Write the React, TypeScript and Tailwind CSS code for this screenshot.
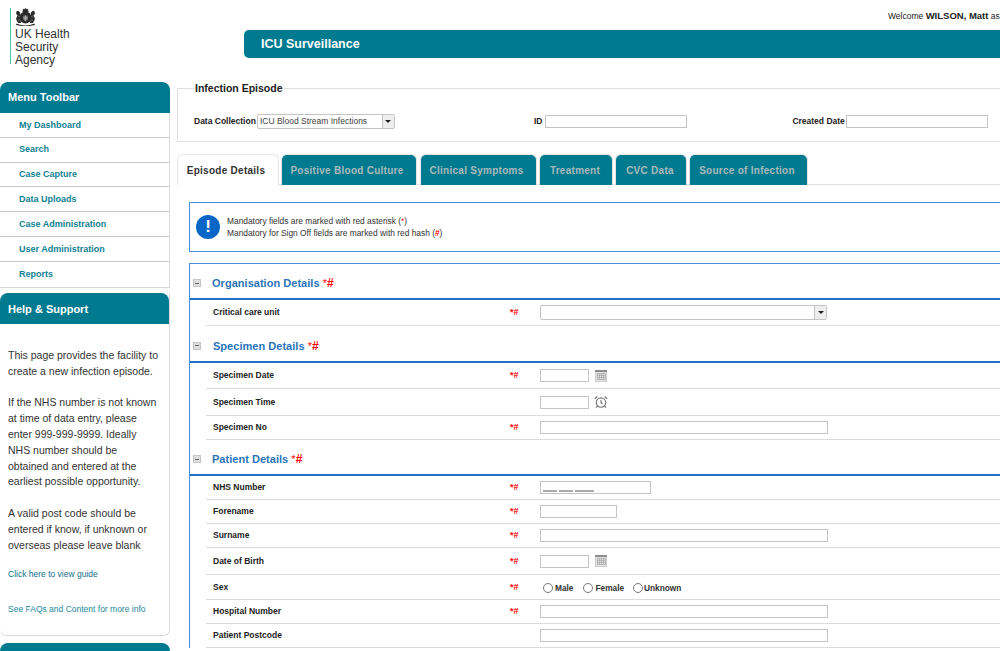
import React from "react";
import { AlarmClock } from "lucide-react";

const Calendar = () => (
  <svg width="12" height="12" viewBox="0 0 12 12" className="ml-[6px]">
    <rect x="0" y="0" width="12" height="12" fill="#e2e2e2" stroke="#a0a0a0" strokeWidth="0.6" />
    <rect x="0" y="0" width="12" height="2" fill="#8c8c8c" />
    <path d="M2 3.5H10.5M2 5.5H10.5M2 7.5H10.5M2 9.5H10.5M2.5 3.5V9.5M4.5 3.5V9.5M6.5 3.5V9.5M8.5 3.5V9.5M10.5 3.5V9.5" stroke="#a6a6a6" strokeWidth="0.7" fill="none" />
  </svg>
);

const Input = ({ w }: { w: string }) => (
  <input readOnly className={`${w} h-[11px] box-content border border-[#c4c4c4] bg-white`} />
);

const Row = ({
  label,
  req = true,
  h,
  children,
}: {
  label: string;
  req?: boolean;
  h: string;
  children?: React.ReactNode;
}) => (
  <div className={`ml-[16px] flex ${h} items-center border-b border-[#dcdcdc]`}>
    <div className="w-[297px] pl-[7px] text-[8.5px] font-bold text-[#222]">{label}</div>
    <div className="w-[37px] pl-[7px] text-[9px] leading-none font-bold text-[#f00]">{req && "*#"}</div>
    <div className="flex items-center">{children}</div>
  </div>
);

const SectionHead = ({ title, h, tl = "ml-[11px]" }: { title: string; h: string; tl?: string }) => (
  <div className={`flex ${h} items-center border-b-2 border-[#1f72c4] pt-[4px]`}>
    <div className="ml-[3px] flex h-[8px] w-[8px] items-center justify-center border border-[#c4c4c4] bg-[#dedede]">
      <div className="h-px w-[4px] bg-[#666]" />
    </div>
    <h3 className={`${tl} text-[11px] font-bold tracking-[0.03px] text-[#2a74b8]`}>
      {title} <span className="font-normal text-[#f00]">*</span><span className="text-[12px] text-[#f00]">#</span>
    </h3>
  </div>
);

const Tab = ({ children, w }: { children: React.ReactNode; w: string }) => (
  <div className={`${w} flex h-[31px] items-center justify-center rounded-t-[6px] border border-b-0 border-[#e4e4e4] bg-[#007a8f] text-[10px] font-bold tracking-[0.27px] text-[#a9b9bc]`}>
    {children}
  </div>
);

const menu = ["My Dashboard", "Search", "Case Capture", "Data Uploads", "Case Administration", "User Administration", "Reports"];

export default function App() {
  return (
    <div className="h-[651px] w-[1000px] overflow-hidden bg-white font-['Liberation_Sans',Arial,sans-serif] text-[#222]">
      <header className="flex h-[82px]">
        <div className="w-[244px] pl-[10px] pt-[8px]">
          <div className="h-[56px] w-[70px] border-l border-[#3cc8b0] pl-[4px]">
            <svg width="21" height="18" viewBox="0 0 21 18" className="block">
              <g fill="#2b2b2b">
                <path d="M8 0.5 L9 1.5 L10.5 0 L12 1.5 L13 0.5 L13.5 4 L7.5 4Z" />
                <circle cx="10.5" cy="9.5" r="6" />
                <path d="M5 4.5 Q3 1.5 1.5 3.5 L1 6 L2.5 7 L1 11 L3 15 L6 15 L5 9Z" />
                <path d="M16 4.5 Q18 1.5 19.5 3.5 L20 6 L18.5 7 L20 11 L18 15 L15 15 L16 9Z" />
                <path d="M1.5 15.5 Q10.5 19.5 19.5 15.5 L20 17 Q10.5 19.5 1 17Z" />
              </g>
              <path d="M8.2 7.5 H12.8 V10.5 Q12.8 12.5 10.5 13.2 Q8.2 12.5 8.2 10.5Z" fill="#777" />
              <path d="M10.5 7.5V13M8.2 10H12.8" stroke="#ddd" strokeWidth="0.6" />
              <path d="M3 8 L5 9 M18 8 L16 9 M3 12 L5 12 M18 12 L16 12" stroke="#bbb" strokeWidth="0.5" />
            </svg>
            <div className="mt-[2px] text-[12px] leading-[13px] text-[#333]">
              UK Health<br />Security<br />Agency
            </div>
          </div>
        </div>
        <div className="min-w-0 flex-1">
          <div className="ml-[644px] h-[30px] whitespace-nowrap pt-[10px] text-[8.5px] leading-[12px]">
            Welcome <b className="text-[9.5px]">WILSON, Matt</b> as
          </div>
          <div className="flex h-[28px] w-[800px] items-center rounded-l-[5px] bg-[#007a8f] pl-[17px] text-[12.5px] font-bold text-white">
            ICU Surveillance
          </div>
        </div>
      </header>

      <div className="flex">
        <aside className="w-[170px] shrink-0">
          <div className="rounded-t-[8px] border-b border-[#d8d8d8]">
            <div className="flex h-[31px] items-center rounded-t-[8px] bg-[#007a8f] pl-[8px] text-[11px] font-bold text-white">
              Menu Toolbar
            </div>
            <nav className="border-r border-[#dcdcdc]">
              {menu.map((m) => (
                <div key={m} className="flex h-[24.8px] items-center border-b border-[#c8c8c8] pl-[19px] pt-[1px] text-[9px] font-bold text-[#0f7f93] last:border-b-0">
                  {m}
                </div>
              ))}
            </nav>
          </div>
          <div className="mt-[5.3px] h-[343px] rounded-b-[6px] border-b border-r border-[#dcdcdc]">
            <div className="flex h-[31px] items-center rounded-t-[8px] bg-[#007a8f] pl-[8px] pt-[1px] text-[11px] font-bold text-white">
              Help &amp; Support
            </div>
            <div className="pl-[8px] pt-[24px] text-[10.5px] leading-[15.8px] text-[#333]">
              <p>This page provides the facility to<br />create a new infection episode.</p>
              <p className="mt-[16px]">If the NHS number is not known<br />at time of data entry, please<br />enter 999-999-9999. Ideally<br />NHS number should be<br />obtained and entered at the<br />earliest possible opportunity.</p>
              <p className="mt-[16px]">A valid post code should be<br />entered if know, if unknown or<br />overseas please leave blank</p>
              <p className="mt-[13px] text-[8.5px] text-[#0f6f8c]">Click here to view guide</p>
              <p className="mt-[20px] text-[8.5px] text-[#1b8a9c]">See FAQs and Content for more info</p>
            </div>
          </div>
          <div className="mt-[7px] h-[20px] rounded-t-[8px] bg-[#007a8f]" />
        </aside>

        <main className="ml-[7px] w-[900px] shrink-0">
          <fieldset className="-mt-[1px] h-[61px] border border-[#e0e0e0] pl-[16px]">
            <legend className="px-[1px] pt-[1px] text-[10.5px] font-bold leading-[13px] text-[#222]">Infection Episode</legend>
            <div className="mt-[19px] flex items-center text-[8.5px] font-bold">
              <span>Data Collection</span>
              <div className="ml-[1px] flex h-[15px] w-[138px] items-center rounded-[2px] border border-[#c4c4c4]">
                <span className="flex-1 pl-[2px] text-[8.5px] font-normal text-[#444]">ICU Blood Stream Infections</span>
                <span className="flex h-full w-[12px] items-center justify-center border-l border-[#c4c4c4] bg-[#eee]">
                  <span className="border-x-[3px] border-t-[3px] border-x-transparent border-t-[#222]" />
                </span>
              </div>
              <span className="ml-[139px]">ID</span>
              <Input w="w-[140px] ml-[3px]" />
              <span className="ml-[105px]">Created Date</span>
              <Input w="w-[140px] ml-[1px]" />
            </div>
          </fieldset>

          <div className="mt-[12px] flex h-[31px] border-b border-[#e0e0e0]">
            <div className="mr-[2px] flex h-[31px] w-[102px] items-center justify-center rounded-t-[6px] border border-b-0 border-[#e4e4e4] bg-white pr-[4px] text-[10px] font-bold tracking-[0.27px] text-[#333]">
              Episode Details
            </div>
            <Tab w="w-[136px] mr-[3px] pr-[4px]">Positive Blood Culture</Tab>
            <Tab w="w-[117px] mr-[2px] pr-[4px]">Clinical Symptoms</Tab>
            <Tab w="w-[74px] mr-[2px] pr-[2px]">Treatment</Tab>
            <Tab w="w-[72px] mr-[2px] pr-[2px]">CVC Data</Tab>
            <Tab w="w-[119px] pr-[3px]">Source of Infection</Tab>
          </div>

          <div className="ml-[12px] mt-[17px] flex h-[50px] items-center border border-r-0 border-[#4a90d9] pl-[6px]">
            <div className="flex h-[24px] w-[24px] items-center justify-center rounded-full bg-[#0866c6] text-[17px] font-bold text-white">!</div>
            <div className="ml-[7px] text-[8.4px] leading-[12px] text-[#333]">
              <div>Mandatory fields are marked with red asterisk (<span className="text-[#f00]">*</span>)</div>
              <div>Mandatory for Sign Off fields are marked with red hash (<b className="text-[#f00]">#</b>)</div>
            </div>
          </div>

          <div className="ml-[12px] mt-[11px] border-l border-t border-[#4a90d9]">
            <SectionHead title="Organisation Details" h="h-[36px]" />
            <Row label="Critical care unit" h="h-[26px]">
              <div className="flex h-[15px] w-[287px] items-center justify-end rounded-[2px] border border-[#c4c4c4]">
                <span className="flex h-full w-[12px] items-center justify-center border-l border-[#c4c4c4] bg-[#eee]">
                  <span className="border-x-[3px] border-t-[3px] border-x-transparent border-t-[#222]" />
                </span>
              </div>
            </Row>
            <SectionHead title="Specimen Details" h="h-[37px]" tl="ml-[12px]" />
            <Row label="Specimen Date" h="h-[26px]">
              <Input w="w-[47px]" /><Calendar />
            </Row>
            <Row label="Specimen Time" req={false} h="h-[27px]">
              <Input w="w-[47px]" />
              <AlarmClock size={14} strokeWidth={2} color="#777" className="ml-[5px] -mt-[1px]" />
            </Row>
            <Row label="Specimen No" h="h-[24px]">
              <Input w="w-[286px]" />
            </Row>
            <SectionHead title="Patient Details" h="h-[36px]" />
            <Row label="NHS Number" h="h-[24px]">
              <div className="relative flex">
                <Input w="w-[109px]" />
                <span className="absolute left-[3px] top-[9px] flex gap-[2px]">
                  <i className="h-[1.5px] w-[14px] bg-[#aaa]" /><i className="h-[1.5px] w-[14px] bg-[#aaa]" /><i className="h-[1.5px] w-[19px] bg-[#aaa]" />
                </span>
              </div>
            </Row>
            <Row label="Forename" h="h-[24px]"><Input w="w-[75px]" /></Row>
            <Row label="Surname" h="h-[24px]"><Input w="w-[286px]" /></Row>
            <Row label="Date of Birth" h="h-[27px]"><Input w="w-[47px]" /><Calendar /></Row>
            <Row label="Sex" h="h-[25px]">
              <div className="flex items-center pt-[3px] text-[8.3px] font-bold text-[#333]">
                <input type="radio" readOnly className="ml-[3px] -mt-[2px] h-[10px] w-[10px] appearance-none rounded-full border border-[#777]" />
                <span className="ml-[2px]">Male</span>
                <input type="radio" readOnly className="ml-[10px] -mt-[2px] h-[10px] w-[10px] appearance-none rounded-full border border-[#777]" />
                <span className="ml-[2px]">Female</span>
                <input type="radio" readOnly className="ml-[9px] -mt-[2px] h-[10px] w-[10px] appearance-none rounded-full border border-[#777]" />
                <span className="ml-[1px]">Unknown</span>
              </div>
            </Row>
            <Row label="Hospital Number" h="h-[24px]"><Input w="w-[286px]" /></Row>
            <Row label="Patient Postcode" req={false} h="h-[24px]"><Input w="w-[286px]" /></Row>
          </div>
        </main>
      </div>
    </div>
  );
}
